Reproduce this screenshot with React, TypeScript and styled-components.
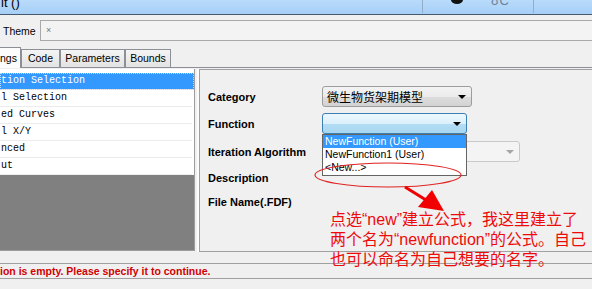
import React from "react";
import styled, { createGlobalStyle } from "styled-components";

const Global = createGlobalStyle`
  html, body { margin: 0; padding: 0; background: #f0f0f0; }
`;

const Frame = styled.div`
  position: relative;
  width: 592px;
  height: 289px;
  overflow: hidden;
  background: #f0f0f0;
  display: flex;
  flex-direction: column;
  font-family: "Liberation Sans", Arial, sans-serif;
  color: #000;
`;

const TitleBar = styled.div`
  height: 14px;
  flex: none;
  display: flex;
  align-items: flex-start;
  background: linear-gradient(#b9dbfb, #a6cff7);
  border-bottom: 1px solid #46586c;
  overflow: hidden;
`;

const TitleText = styled.span`
  font-size: 13px;
  line-height: 13px;
  margin-top: -4px;
  padding-left: 1px;
`;

const TitleButtons = styled.div`
  margin-left: auto;
  margin-right: 58px;
  width: 110px;
  height: 13px;
  border-left: 1px solid #93aec8;
  border-right: 1px solid #93aec8;
  display: flex;
  align-items: flex-start;
`;

const Blob = styled.span`
  width: 12px;
  height: 8px;
  margin: -4px 0 0 28px;
  border-radius: 50%;
  background: #111;
`;

const GreyGlyph = styled.span`
  margin: -6px 0 0 28px;
  font-size: 13px;
  line-height: 13px;
  color: #6f8196;
  letter-spacing: 1px;
`;

const ThemeRow = styled.div`
  margin-top: 5px;
  height: 21px;
  flex: none;
  display: flex;
  align-items: center;
`;

const ThemeLabel = styled.span`
  width: 40px;
  padding-left: 3px;
  box-sizing: border-box;
  font-size: 10.5px;
`;

const ThemeBox = styled.div`
  flex: 1;
  height: 21px;
  box-sizing: border-box;
  border: 1px solid #a9a9a9;
  border-right: none;
  background: #f3f3f3;
  padding-left: 5px;
  font-size: 9px;
  line-height: 18px;
  color: #777;
`;

const TabStrip = styled.div`
  height: 27px;
  flex: none;
  display: flex;
  align-items: flex-end;
  border-bottom: 1px solid #8d8f96;
  box-sizing: border-box;
`;

const Tab = styled.div<{ $w: number; $active?: boolean }>`
  width: ${(p) => p.$w}px;
  height: ${(p) => (p.$active ? 21 : 18)}px;
  margin-bottom: ${(p) => (p.$active ? -1 : 0)}px;
  box-sizing: border-box;
  border: 1px solid #8d8f96;
  border-bottom: none;
  border-left: ${(p) => (p.$active ? "none" : "1px solid #8d8f96")};
  background: ${(p) =>
    p.$active ? "#fcfcfc" : "linear-gradient(#f4f4f4, #e3e3e3)"};
  font-size: 10.5px;
  line-height: ${(p) => (p.$active ? 20 : 17)}px;
  text-align: ${(p) => (p.$active ? "left" : "center")};
  white-space: nowrap;
  overflow: hidden;
  position: relative;
  z-index: ${(p) => (p.$active ? 1 : 0)};
`;

const Body = styled.div`
  margin-top: 1px;
  height: 183px;
  flex: none;
  display: flex;
`;

const LeftPanel = styled.div`
  width: 195px;
  height: 182px;
  box-sizing: border-box;
  border-right: 1px solid #9d9d9d;
  border-bottom: 1px solid #9d9d9d;
  display: flex;
  flex-direction: column;
  background: #fff;
  padding-top: 4px;
`;

const ListRow = styled.div<{ $sel?: boolean }>`
  height: 17px;
  flex: none;
  box-sizing: border-box;
  border-bottom: 1px solid #ececec;
  font-family: "Liberation Mono", "Courier New", monospace;
  font-size: 10px;
  line-height: 16px;
  padding-left: 1px;
  white-space: pre;
  color: ${(p) => (p.$sel ? "#fff" : "#000")};
  background: ${(p) => (p.$sel ? "#3399ff" : "#fff")};
  outline: ${(p) => (p.$sel ? "1px dotted #bcdcff" : "none")};
  outline-offset: -1px;
  margin-right: ${(p) => (p.$sel ? 0 : 2)}px;
`;

const GreyFill = styled.div`
  flex: 1;
  background: #808080;
`;

const RightPanel = styled.div`
  flex: 1;
  margin-left: 4px;
  box-sizing: border-box;
  border-left: 1px solid #a0a0a0;
  border-top: 1px solid #a0a0a0;
  border-bottom: 1px solid #a0a0a0;
  box-shadow: -2px 0 0 #fdfdfd;
  padding: 16px 0 0 8px;
`;

const FormRow = styled.div<{ $mt: number }>`
  display: grid;
  grid-template-columns: 114px auto;
  align-items: center;
  height: 21px;
  margin-top: ${(p) => p.$mt}px;
`;

const Label = styled.span`
  font-size: 11px;
  font-weight: bold;
`;

const ComboWrap = styled.div`
  position: relative;
`;

const Combo = styled.div<{ $w: number; $kind: "normal" | "focus" | "disabled" }>`
  width: ${(p) => p.$w}px;
  height: 21px;
  box-sizing: border-box;
  border-radius: 3px;
  border: 1px solid
    ${(p) =>
      p.$kind === "focus" ? "#3c7fb1" : p.$kind === "disabled" ? "#c9c9c9" : "#9d9d9d"};
  background: ${(p) =>
    p.$kind === "focus"
      ? "linear-gradient(#ecf7fd 0%, #dcf0fb 50%, #b3ddf4 51%, #a9d6f1 100%)"
      : p.$kind === "disabled"
      ? "#f4f4f4"
      : "linear-gradient(#f3f3f3 0%, #ebebeb 50%, #dddddd 51%, #d3d3d3 100%)"};
  display: flex;
  align-items: center;
  padding: 0 5px 0 4px;
  font-family: "Noto Sans CJK SC", sans-serif;
  font-size: 12px;
  color: #000;
`;

const ComboText = styled.span`
  flex: 1;
  line-height: 19px;
  white-space: nowrap;
`;

const Arrow = styled.span<{ $grey?: boolean }>`
  width: 0;
  height: 0;
  border-left: 4px solid transparent;
  border-right: 4px solid transparent;
  border-top: 4px solid ${(p) => (p.$grey ? "#a5a5a5" : "#000")};
  margin-top: 1px;
`;

const DropList = styled.div`
  position: absolute;
  top: 100%;
  left: 0;
  width: 145px;
  box-sizing: border-box;
  border: 1px solid #646464;
  background: #fff;
  z-index: 3;
  padding-bottom: 1px;
`;

const DropItem = styled.div<{ $sel?: boolean }>`
  height: 13px;
  font-size: 10.5px;
  line-height: 13px;
  padding-left: 2px;
  white-space: nowrap;
  color: ${(p) => (p.$sel ? "#fff" : "#000")};
  background: ${(p) => (p.$sel ? "#3399ff" : "transparent")};
`;

const StatusBar = styled.div`
  margin-top: 11px;
  height: 16px;
  flex: none;
  box-sizing: border-box;
  border-top: 1px solid #a0a0a0;
  border-bottom: 1px solid #a0a0a0;
  font-size: 10.5px;
  font-weight: bold;
  line-height: 14px;
  color: #d00000;
  white-space: nowrap;
`;

const Annotation = styled.svg`
  position: absolute;
  left: 0;
  top: 0;
  z-index: 4;
  pointer-events: none;
`;

const Note = styled.div`
  position: absolute;
  left: 330px;
  top: 210px;
  z-index: 5;
  font-family: "Liberation Sans", "Noto Sans CJK SC", sans-serif;
  font-size: 16px;
  line-height: 20px;
  color: #ee0a0a;
  white-space: nowrap;
`;

const listItems = [
  "tion Selection",
  "l Selection",
  "ed Curves",
  "l X/Y",
  "nced",
  "ut",
];

export default function App() {
  return (
    <Frame>
      <Global />
      <TitleBar>
        <TitleText>it ()</TitleText>
        <TitleButtons>
          <Blob />
          <GreyGlyph>ʊC</GreyGlyph>
        </TitleButtons>
      </TitleBar>

      <ThemeRow>
        <ThemeLabel>Theme</ThemeLabel>
        <ThemeBox>×</ThemeBox>
      </ThemeRow>

      <TabStrip>
        <Tab $w={21} $active>
          ngs
        </Tab>
        <Tab $w={39}>Code</Tab>
        <Tab $w={65}>Parameters</Tab>
        <Tab $w={46}>Bounds</Tab>
      </TabStrip>

      <Body>
        <LeftPanel>
          {listItems.map((t, i) => (
            <ListRow key={t} $sel={i === 0}>
              {t}
            </ListRow>
          ))}
          <GreyFill />
        </LeftPanel>

        <RightPanel>
          <FormRow $mt={0}>
            <Label>Category</Label>
            <Combo $w={150} $kind="normal">
              <ComboText>微生物货架期模型</ComboText>
              <Arrow />
            </Combo>
          </FormRow>
          <FormRow $mt={6}>
            <Label>Function</Label>
            <ComboWrap>
              <Combo $w={145} $kind="focus">
                <ComboText />
                <Arrow />
              </Combo>
              <DropList>
                <DropItem $sel>NewFunction (User)</DropItem>
                <DropItem>NewFunction1 (User)</DropItem>
                <DropItem>&lt;New...&gt;</DropItem>
              </DropList>
            </ComboWrap>
          </FormRow>
          <FormRow $mt={7}>
            <Label>Iteration Algorithm</Label>
            <Combo $w={198} $kind="disabled">
              <ComboText />
              <Arrow $grey />
            </Combo>
          </FormRow>
          <FormRow $mt={5}>
            <Label>Description</Label>
          </FormRow>
          <FormRow $mt={3}>
            <Label>File Name(.FDF)</Label>
          </FormRow>
        </RightPanel>
      </Body>

      <StatusBar>ion is empty. Please specify it to continue.</StatusBar>

      <Annotation width="592" height="289" viewBox="0 0 592 289">
        <ellipse cx="388" cy="175" rx="73" ry="12" fill="none" stroke="#e02222" strokeWidth="1.2" />
        <line x1="405" y1="187" x2="426" y2="200" stroke="#f00000" strokeWidth="3" />
        <polygon points="444,211 418,207 432,190" fill="#f00000" />
      </Annotation>

      <Note>
        点选“new”建立公式，我这里建立了
        <br />
        两个名为“newfunction”的公式。自己
        <br />
        也可以命名为自己想要的名字。
      </Note>
    </Frame>
  );
}
